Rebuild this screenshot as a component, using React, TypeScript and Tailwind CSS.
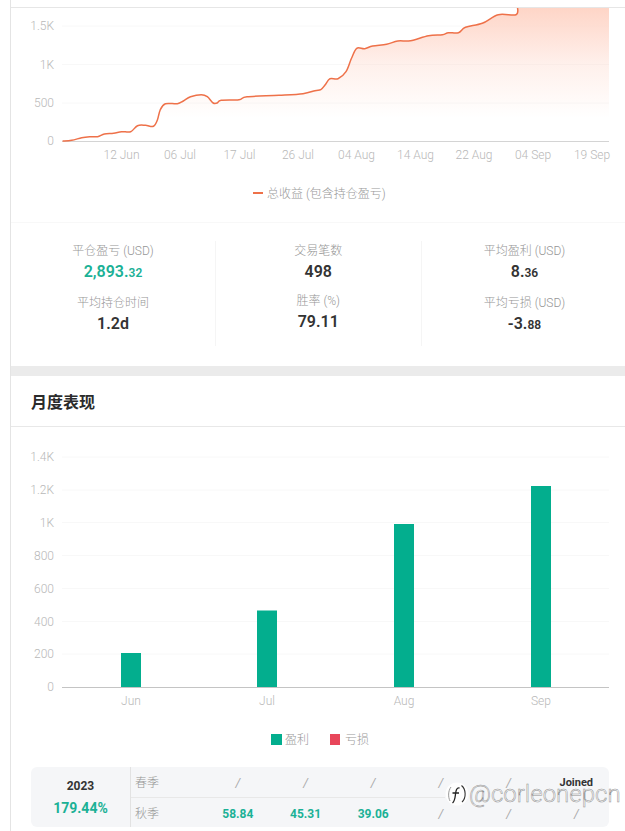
const font = "font-['Roboto','Noto_Sans_CJK_SC',sans-serif]";

const points: [number, number][] = [
  [62.6, 141], [71.7, 140.3], [81.7, 137.7], [89.7, 136.7], [97.6, 136.7], [104.4, 134], [113.6, 133.3],
  [121.6, 131.7], [130.7, 131.7], [137.5, 125.7], [145.5, 125.3], [153.4, 126.3], [157.4, 120], [160.2, 110],
  [165.4, 103.7], [177.4, 103.7], [183.3, 101], [190.5, 96.7], [201.3, 94.7], [207.3, 96.7], [213.2, 103],
  [217.2, 103], [221.2, 100.3], [239, 99.7], [247, 96.7], [279, 95.3], [303, 93.7], [315, 90.7], [320.8, 89.7],
  [325, 85], [330, 78.7], [338, 78.7], [346, 71.7], [351.5, 58.3], [356.7, 48.3], [364.7, 48.7], [372.7, 46],
  [386.6, 44.3], [397.8, 41], [410.5, 40.7], [428.5, 35.7], [442.4, 34.7], [448.4, 32.7], [458.4, 32.7],
  [465.5, 27.3], [482.3, 23.3], [498.2, 14.7], [516, 14.7], [517.5, 7],
];

// small catmull-rom so the line bends like the chart lib does
const smooth = (pts: [number, number][]) => {
  let d = `M${pts[0][0]} ${pts[0][1]}`;
  for (let i = 0; i < pts.length - 1; i++) {
    const p0 = pts[Math.max(i - 1, 0)];
    const p1 = pts[i];
    const p2 = pts[i + 1];
    const p3 = pts[Math.min(i + 2, pts.length - 1)];
    const c1x = p1[0] + (p2[0] - p0[0]) / 6;
    const c1y = p1[1] + (p2[1] - p0[1]) / 6;
    const c2x = p2[0] - (p3[0] - p1[0]) / 6;
    const c2y = p2[1] - (p3[1] - p1[1]) / 6;
    d += ` C${c1x.toFixed(1)} ${c1y.toFixed(1)} ${c2x.toFixed(1)} ${c2y.toFixed(1)} ${p2[0]} ${p2[1]}`;
  }
  return d;
};

const linePath = smooth(points);

const yTicks = [
  { label: '1.5K', y: 26 },
  { label: '1K', y: 64.5 },
  { label: '500', y: 103 },
];

const xTicks = [
  { label: '12 Jun', x: 121.5 },
  { label: '06 Jul', x: 180 },
  { label: '17 Jul', x: 239.5 },
  { label: '26 Jul', x: 298 },
  { label: '04 Aug', x: 356.5 },
  { label: '14 Aug', x: 415.5 },
  { label: '22 Aug', x: 474 },
  { label: '04 Sep', x: 533 },
  { label: '19 Sep', x: 592 },
];

const ProfitChart = () => (
  <svg width="614" height="214" viewBox="11 8 614 214" className={`block ${font}`}>
    <defs>
      <linearGradient id="profitFill" x1="0" y1="8" x2="0" y2="118" gradientUnits="userSpaceOnUse">
        <stop offset="0" stopColor="#fed5c7" />
        <stop offset="0.5" stopColor="#fed5c7" stopOpacity="0.36" />
        <stop offset="1" stopColor="#fed5c7" stopOpacity="0" />
      </linearGradient>
    </defs>
    {yTicks.map((t) => (
      <line key={t.label} x1="62" x2="609" y1={t.y} y2={t.y} stroke="#f8f8f8" />
    ))}
    <path d={`${linePath} L609 7 L609 141 L62.6 141 Z`} fill="url(#profitFill)" />
    <line x1="62" x2="609" y1="141.5" y2="141.5" stroke="#d4d4d4" />
    <path d={linePath} fill="none" stroke="#ee7149" strokeWidth="1.5" strokeLinejoin="round" />
    {yTicks.map((t) => (
      <text key={t.label} x="54" y={t.y + 4} textAnchor="end" fontSize="12" fontWeight="300" fill="#b8b8b8">
        {t.label}
      </text>
    ))}
    <text x="54" y="145" textAnchor="end" fontSize="12" fontWeight="300" fill="#b8b8b8">0</text>
    {xTicks.map((t) => (
      <text key={t.label} x={t.x} y="159" textAnchor="middle" fontSize="12" fontWeight="300" fill="#b8b8b8">
        {t.label}
      </text>
    ))}
    <rect x="253" y="192" width="10" height="2" fill="#ee7149" />
    <text x="267" y="198" fontSize="12" fontWeight="300" fill="#999999">总收益 (包含持仓盈亏)</text>
  </svg>
);

const barTicks = [
  { label: '1.4K', y: 457 },
  { label: '1.2K', y: 490 },
  { label: '1K', y: 522.5 },
  { label: '800', y: 555.5 },
  { label: '600', y: 588.5 },
  { label: '400', y: 621.5 },
  { label: '200', y: 654 },
];

const bars = [
  { label: 'Jun', x: 121, top: 653 },
  { label: 'Jul', x: 257, top: 610.5 },
  { label: 'Aug', x: 394, top: 524 },
  { label: 'Sep', x: 531, top: 486 },
];

const MonthlyChart = () => (
  <svg width="614" height="330" viewBox="11 427 614 330" className={`block ${font}`}>
    {barTicks.map((t) => (
      <g key={t.label}>
        <line x1="62" x2="609" y1={t.y} y2={t.y} stroke="#f8f8f8" />
        <text x="54" y={t.y + 4} textAnchor="end" fontSize="12" fontWeight="300" fill="#b8b8b8">{t.label}</text>
      </g>
    ))}
    <text x="54" y="691" textAnchor="end" fontSize="12" fontWeight="300" fill="#b8b8b8">0</text>
    {bars.map((b) => (
      <g key={b.label}>
        <rect x={b.x} y={b.top} width="20" height={687 - b.top} fill="#03ae8e" />
        <text x={b.x + 10} y="705" textAnchor="middle" fontSize="12" fontWeight="300" fill="#b8b8b8">{b.label}</text>
      </g>
    ))}
    <line x1="62" x2="609" y1="687.5" y2="687.5" stroke="#c4c4c4" />
    <rect x="271" y="734" width="11" height="11" fill="#03ae8e" />
    <text x="285" y="744" fontSize="12" fontWeight="300" fill="#999999">盈利</text>
    <rect x="330" y="734" width="10" height="11" fill="#e8465a" />
    <text x="345" y="744" fontSize="12" fontWeight="300" fill="#999999">亏损</text>
  </svg>
);

const Stat = ({ label, value, cents, green }: { label: string; value: string; cents?: string; green?: boolean }) => (
  <div className="flex flex-col items-center">
    <span className="text-[12px] leading-[18px] font-light text-[#969696]">{label}</span>
    <span className={`text-[16px] leading-[23px] font-semibold ${green ? 'text-[#1bb196]' : 'text-[#333]'}`}>
      {value}
      {cents && <span className="text-[12px]">{cents}</span>}
    </span>
  </div>
);

const Cell = ({ children, green }: { children: React.ReactNode; green?: boolean }) => (
  <span className={`w-[67.7px] shrink-0 text-center ${green ? 'text-[12px] font-bold text-[#1bb196]' : 'text-[12px] text-[#a8a8a8] italic'}`}>
    {children}
  </span>
);

const App = () => {
  return (
    <div className={`relative w-[625px] h-[831px] overflow-hidden bg-white ${font}`}>
      <div className="ml-[10px] border-l border-[#e4e4e4] h-full">
        <div className="h-[8px] border-b border-[#e6e6e6]" />
        <ProfitChart />
        <div className="border-t border-[#f8f8f8] pt-[18px] h-[144px] flex">
          <div className="w-[205px] shrink-0 h-[105px] flex flex-col items-center gap-[9px] pt-[1px] border-r border-[#f5f5f5]">
            <Stat label="平仓盈亏 (USD)" value="2,893." cents="32" green />
            <Stat label="平均持仓时间" value="1.2d" />
          </div>
          <div className="w-[205.5px] shrink-0 h-[105px] flex flex-col items-center gap-[9px] pt-[1px] border-r border-[#f5f5f5]">
            <Stat label="交易笔数" value="498" />
            <Stat label="胜率 (%)" value="79.11" />
          </div>
          <div className="w-[206px] shrink-0 h-[105px] flex flex-col items-center gap-[9px] pt-[1px]">
            <Stat label="平均盈利 (USD)" value="8." cents="36" />
            <Stat label="平均亏损 (USD)" value="-3." cents="88" />
          </div>
        </div>
        <div className="h-[10px] bg-[#ebebeb]" />
        <div className="h-[51px] border-b border-[#e8e8e8] pl-[20px] pt-[4px] flex items-center">
          <span className="text-[16px] font-bold text-[#2b2b2b]">月度表现</span>
        </div>
        <MonthlyChart />
        <div className="ml-[20px] w-[578px] h-[60px] rounded-[6px] bg-[#f5f6f8] flex mt-[10px]">
          <div className="w-[100px] shrink-0 border-r border-[#e2e2e2] flex flex-col items-center justify-center gap-[5px]">
            <span className="text-[12px] leading-[16px] font-bold text-[#333]">2023</span>
            <span className="text-[14px] leading-[18px] font-bold text-[#1bb196]">179.44%</span>
          </div>
          <div className="flex-1 flex flex-col">
            <div className="h-[30px] pt-[2px] flex items-center pl-[4px]">
              <span className="w-[69px] shrink-0 text-[12px] font-light text-[#969696]">春季</span>
              <Cell>/</Cell>
              <Cell>/</Cell>
              <Cell>/</Cell>
              <Cell>/</Cell>
              <Cell>/</Cell>
              <span className="relative z-30 w-[67.7px] shrink-0 text-center text-[11px] font-bold text-[#333]">Joined</span>
            </div>
            {/* divider stops where the watermark's white blob starts */}
            <div className="h-px w-[314px] bg-[#e8e8e8]" />
            <div className="h-[29px] pt-[3px] flex items-center pl-[4px]">
              <span className="w-[69px] shrink-0 text-[12px] font-light text-[#969696]">秋季</span>
              <Cell green>58.84</Cell>
              <Cell green>45.31</Cell>
              <Cell green>39.06</Cell>
              <Cell>/</Cell>
              <Cell>/</Cell>
              <Cell>/</Cell>
            </div>
          </div>
        </div>
      </div>
      {/* watermark over the table */}
      <div className="absolute left-[445px] top-[780px] flex items-center z-20">
        <svg width="24" height="28" viewBox="0 0 24 28" fill="none">
          <circle cx="12" cy="14" r="11.5" fill="#ffffff" fillOpacity="0.85" />
          <path d="M6 7 C3 11 3 17 5 21" stroke="#9a9a9a" strokeWidth="1" />
          <path d="M16.5 5.5 C21 9 21.5 18 17 22" stroke="#333" strokeWidth="1.1" />
          <path d="M14.5 8 C11.5 7.5 11 10.5 10.5 14 C10 18 10 21 7.5 23 M7.5 13 L14 13" stroke="#222" strokeWidth="1.3" />
        </svg>
        <span className="text-[24px] leading-[28px] font-light text-white [-webkit-text-stroke:0.5px_#8f8f8f] whitespace-nowrap">@corleonepcn</span>
      </div>
    </div>
  );
};

export default App;
